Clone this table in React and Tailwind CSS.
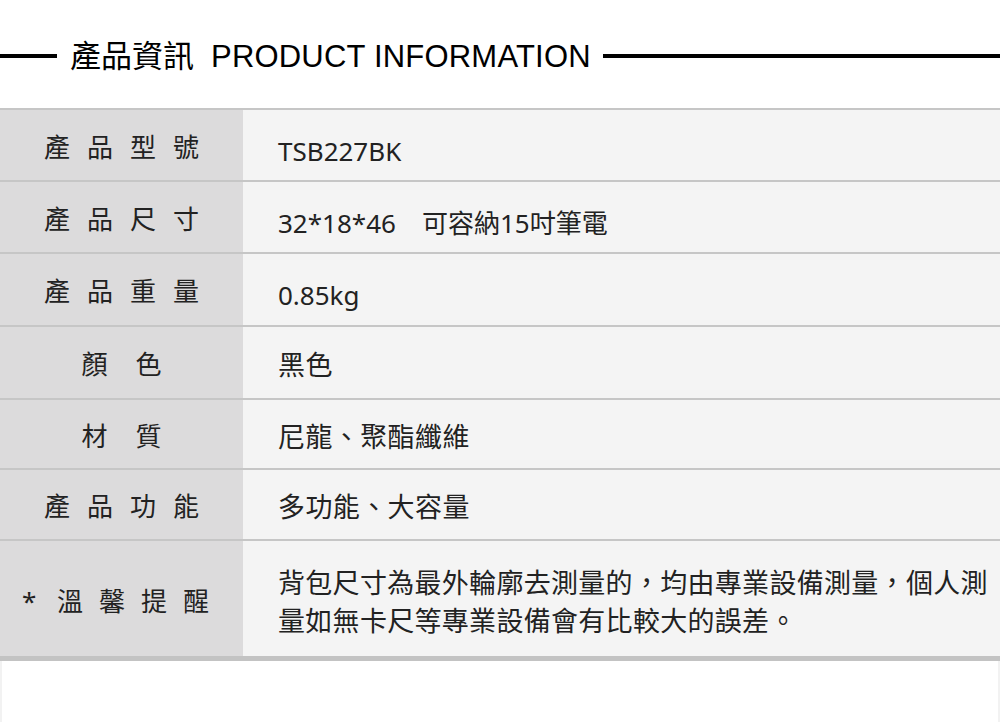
const rows = [
  { label: ['產', '品', '型', '號'], value: 'TSB227BK', h: 'h-[72px]', latin: true },
  { label: ['產', '品', '尺', '寸'], value: '32*18*46　可容納15吋筆電', h: 'h-[72px]', latin: true },
  { label: ['產', '品', '重', '量'], value: '0.85kg', h: 'h-[73px]', latin: true },
  { label: ['顏', '色'], value: '黑色', h: 'h-[73px]' },
  { label: ['材', '質'], value: '尼龍、聚酯纖維', h: 'h-[70px]' },
  { label: ['產', '品', '功', '能'], value: '多功能、大容量', h: 'h-[71px]' },
];

const cjk = { fontFamily: '"Noto Sans", "Noto Sans CJK TC", sans-serif' };

function Row({ label, value, h, latin }) {
  return (
    <div className={`flex ${h} border-b-2 border-[#c6c6c6]`}>
      <div
        className={`w-[243px] shrink-0 bg-[#dcdbdc] flex items-center justify-center pt-[4px] text-[26px] text-[#222] ${
          label.length === 2 ? 'gap-[28px]' : 'gap-[17px]'
        }`}
        style={cjk}
      >
        {label.map((c, i) => (
          <span key={i}>{c}</span>
        ))}
      </div>
      <div
        className={`flex-1 bg-[#f4f4f4] flex items-center pl-[35px] text-[#222] whitespace-nowrap ${
          latin ? 'pt-[12px] text-[26px]' : 'pt-[6px] text-[27px] tracking-[0.4px]'
        }`}
        style={cjk}
      >
        {value}
      </div>
    </div>
  );
}

export default function App() {
  return (
    <div className="w-[1000px] h-[722px] bg-white overflow-hidden flex flex-col">
      {/* title bar */}
      <div className="h-[108px] shrink-0 flex items-center pt-[4px]">
        <div className="w-[57px] h-[4px] bg-black" />
        <div
          className="ml-[13px] mr-[12px] text-[31px] text-black whitespace-nowrap leading-none flex items-center"
          style={{ fontFamily: '"Liberation Sans", "Noto Sans CJK TC", sans-serif' }}
        >
          <span>產品資訊</span>
          <span className="ml-[17px] tracking-[0.2px]">PRODUCT INFORMATION</span>
        </div>
        <div className="flex-1 h-[4px] bg-black" />
      </div>

      {/* table */}
      <div className="border-t-2 border-[#c6c6c6]">
        {rows.map((r, i) => (
          <Row key={i} {...r} />
        ))}
        <div className="flex h-[120px] border-b-[5px] border-[#c3c3c3]">
          <div
            className="w-[243px] shrink-0 bg-[#dcdbdc] flex items-center pl-[22px] pt-[6px] text-[26px] text-[#222]"
            style={cjk}
          >
            <span className="w-[35px]">*</span>
            <div className="flex gap-[16px]">
              <span>溫</span>
              <span>馨</span>
              <span>提</span>
              <span>醒</span>
            </div>
          </div>
          <div
            className="flex-1 bg-[#f4f4f4] flex items-center pl-[35px] pt-[6px] text-[27px] leading-[38px] tracking-[0.3px] text-[#222] whitespace-nowrap"
            style={cjk}
          >
            <p>
              背包尺寸為最外輪廓去測量的，均由專業設備測量，個人測
              <br />
              量如無卡尺等專業設備會有比較大的誤差。
            </p>
          </div>
        </div>
      </div>

      <div className="flex-1 border-x-2 border-[#f2f2f2]" />
    </div>
  );
}
